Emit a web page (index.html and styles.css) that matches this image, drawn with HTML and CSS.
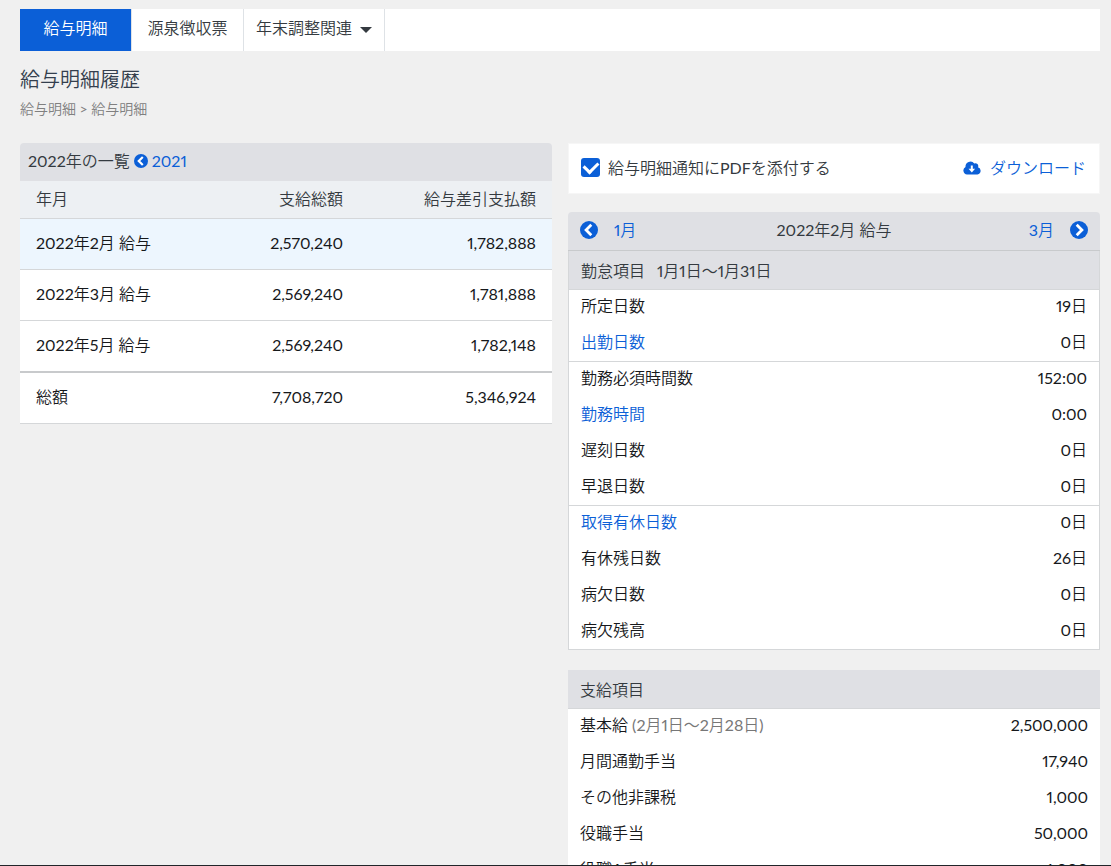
FILE: index.html
```html
<!DOCTYPE html>
<html lang="ja">
<head>
<meta charset="utf-8">
<meta name="viewport" content="width=device-width, initial-scale=1">
<title>給与明細履歴</title>
<link rel="stylesheet" href="styles.css">
</head>
<body>
<svg class="sprite" aria-hidden="true">
  <symbol id="chevron-left" viewBox="0 0 18 18"><circle cx="9" cy="9" r="9" fill="#0b5fd7"/><path d="M11.300 3.800 6.100 9l5.200 5.200" fill="none" stroke="#fff" stroke-width="2.800"/></symbol>
  <symbol id="chevron-right" viewBox="0 0 18 18"><circle cx="9" cy="9" r="9" fill="#0b5fd7"/><path d="M6.700 3.800 11.900 9l-5.200 5.200" fill="none" stroke="#fff" stroke-width="2.800"/></symbol>
</svg>
<div class="page">
  <nav class="tabs">
    <a class="tab tab-active" href="#">給与明細</a>
    <a class="tab" href="#">源泉徴収票</a>
    <button class="tab tab-menu" type="button">年末調整関連<span class="caret"></span></button>
  </nav>
  <h1 class="title">給与明細履歴</h1>
  <div class="breadcrumb">給与明細 &gt; 給与明細</div>
  <main class="columns">
    <section class="history">
      <div class="history-head">2022年の一覧 <a class="year-link" href="#"><svg class="icon-small"><use href="#chevron-left"/></svg>2021</a></div>
      <table class="history-table">
        <thead><tr><th>年月</th><th>支給総額</th><th>給与差引支払額</th></tr></thead>
        <tbody>
          <tr class="selected"><td>2022年2月 給与</td><td>2,570,240</td><td>1,782,888</td></tr>
          <tr><td>2022年3月 給与</td><td>2,569,240</td><td>1,781,888</td></tr>
          <tr><td>2022年5月 給与</td><td>2,569,240</td><td>1,782,148</td></tr>
        </tbody>
        <tfoot><tr><td>総額</td><td>7,708,720</td><td>5,346,924</td></tr></tfoot>
      </table>
    </section>
    <div class="detail">
      <div class="toolbar">
        <label class="attach"><input class="check" type="checkbox" checked>給与明細通知にPDFを添付する</label>
        <a class="download" href="#"><svg class="icon-cloud" viewBox="0 0 18 14"><path d="M4 13.500A4 4 0 0 1 2.500 6 5 5 0 0 1 11.300 2.400 2.900 2.900 0 0 1 15 6.300 3.700 3.700 0 0 1 14.500 13.500Z" fill="#0b5fd7"/><path d="M8.800 4.500V9" stroke="#fff" stroke-width="2"/><path d="M5.500 7.800h6.600L8.800 11.500Z" fill="#fff"/></svg>ダウンロード</a>
      </div>
      <section class="card card-framed">
        <header class="month-nav">
          <a class="month-link" href="#"><svg class="icon"><use href="#chevron-left"/></svg>1月</a>
          <span>2022年2月 給与</span>
          <a class="month-link month-next" href="#">3月<svg class="icon"><use href="#chevron-right"/></svg></a>
        </header>
        <h2 class="card-head">勤怠項目<span class="period">1月1日～1月31日</span></h2>
        <dl class="items">
          <div class="item"><dt>所定日数</dt><dd>19日</dd></div>
          <div class="item item-end"><dt><a href="#">出勤日数</a></dt><dd>0日</dd></div>
          <div class="item"><dt>勤務必須時間数</dt><dd>152:00</dd></div>
          <div class="item"><dt><a href="#">勤務時間</a></dt><dd>0:00</dd></div>
          <div class="item"><dt>遅刻日数</dt><dd>0日</dd></div>
          <div class="item item-end"><dt>早退日数</dt><dd>0日</dd></div>
          <div class="item"><dt><a href="#">取得有休日数</a></dt><dd>0日</dd></div>
          <div class="item"><dt>有休残日数</dt><dd>26日</dd></div>
          <div class="item"><dt>病欠日数</dt><dd>0日</dd></div>
          <div class="item item-end"><dt>病欠残高</dt><dd>0日</dd></div>
        </dl>
      </section>
      <section class="card">
        <h2 class="card-head">支給項目</h2>
        <dl class="items">
          <div class="item"><dt>基本給 <span class="muted">(2月1日～2月28日)</span></dt><dd>2,500,000</dd></div>
          <div class="item"><dt>月間通勤手当</dt><dd>17,940</dd></div>
          <div class="item"><dt>その他非課税</dt><dd>1,000</dd></div>
          <div class="item"><dt>役職手当</dt><dd>50,000</dd></div>
          <div class="item"><dt>役職A手当</dt><dd>1,000</dd></div>
        </dl>
      </section>
    </div>
  </main>
</div>
</body>
</html>
```

FILE: styles.css
```css
* { box-sizing: border-box; }
body {
  margin: 0;
  background: #f0f0f0;
  color: #16181b;
  font: 400 16px/24px Lato, "Noto Sans CJK JP DemiLight", "Noto Sans CJK JP", sans-serif;
  font-variant-numeric: proportional-nums;
}
a { color: #0b5fd7; text-decoration: none; }
svg { display: block; flex: none; }
.sprite { display: none; }
.page {
  height: 100vh;
  overflow: hidden;
  padding: 9px 11px 0 20px;
  border-bottom: 1px solid #212529;
}
.tabs { display: flex; background: #fff; }
.tab {
  display: flex;
  justify-content: center;
  align-items: center;
  min-width: 112px;
  height: 42px;
  padding: 0 12px 4px;
  border: 0;
  border-right: 1px solid #dee2e6;
  background: #fff;
  color: #343a40;
  font: inherit;
}
.tab-active { background: #0b5fd7; background-clip: padding-box; color: #fff; }
.caret {
  margin: 4px 0 0 8px;
  border: 6px solid transparent;
  border-top-color: #343a40;
  border-bottom: 0;
}
.title { margin: 16px 0 0; color: #343f4e; font-size: 20px; line-height: 24px; font-weight: 400; }
.breadcrumb { margin-top: 8px; color: #808080; font-size: 14px; line-height: 20px; }
.columns {
  display: grid;
  grid-template-columns: 1fr 1fr;
  gap: 16px;
  align-items: start;
  margin-top: 24px;
}
.history-head {
  display: flex;
  align-items: center;
  gap: 4px;
  height: 38px;
  padding: 0 8px 2px;
  border-radius: 4px 4px 0 0;
  background: #dfe0e4;
  color: #343a40;
}
.year-link { display: flex; align-items: center; gap: 4px; }
.icon-small { width: 14px; height: 14px; }
.history-table { width: 100%; border-collapse: separate; border-spacing: 0; table-layout: fixed; background: #fff; }
th, td { padding: 12px 16px 14px; border-bottom: 1px solid #d5d7d9; text-align: right; font-weight: 400; }
th { padding: 6px 16px 7px; background: #edf0f3; color: #343a40; }
th:first-child, td:first-child { text-align: left; }
th:last-child { width: 193px; }
.selected td { background: #edf6fe; }
tbody tr:last-child td { border-bottom: 2px solid #c8cacc; }
.toolbar {
  display: flex;
  align-items: center;
  justify-content: space-between;
  height: 51px;
  margin-bottom: 18px;
  padding: 0 13px 2px 12px;
  border: 1px solid #f6f6f6;
  background: #fff;
  color: #343a40;
}
.attach, .download { display: flex; align-items: center; }
.attach { gap: 8px; }
.download { gap: 9px; }
.check {
  appearance: none;
  width: 19px;
  height: 19px;
  margin: 0;
  border-radius: 3px;
  background: #0b5fd7;
  display: grid;
  place-items: center;
}
.check:checked::before {
  content: "";
  width: 7px;
  height: 11px;
  margin-bottom: 3px;
  border: solid #fff;
  border-width: 0 3px 3px 0;
  transform: rotate(45deg);
}
.icon-cloud { width: 18px; height: 14px; }
.month-nav {
  display: grid;
  grid-template-columns: 1fr auto 1fr;
  align-items: center;
  height: 39px;
  padding: 0 12px 2px;
  border-radius: 4px 4px 0 0;
  border-bottom: 1px solid #c8cacc;
  background: #dfe0e4;
  color: #343a40;
}
.month-link { display: flex; align-items: center; gap: 16px; }
.month-next { justify-content: flex-end; }
.icon { width: 18px; height: 18px; }
.card { margin-bottom: 20px; }
.card-head {
  height: 39px;
  margin: 0;
  padding: 8px 12px 6px;
  border-bottom: 1px solid #d5d7d9;
  background: #dfe0e4;
  color: #343a40;
  font-size: 16px;
  line-height: 24px;
  font-weight: 400;
}
.period { margin-left: 12px; }
.items { margin: 0; background: #fff; }
.item {
  display: flex;
  justify-content: space-between;
  height: 36px;
  padding: 4px 12px;
}
.item dd { margin: 0; }
.card-framed .items, .card-framed .card-head { border-left: 1px solid #d5d7d9; border-right: 1px solid #d5d7d9; }
.item-end { border-bottom: 1px solid #d5d7d9; }
.muted { color: #777; }
```
